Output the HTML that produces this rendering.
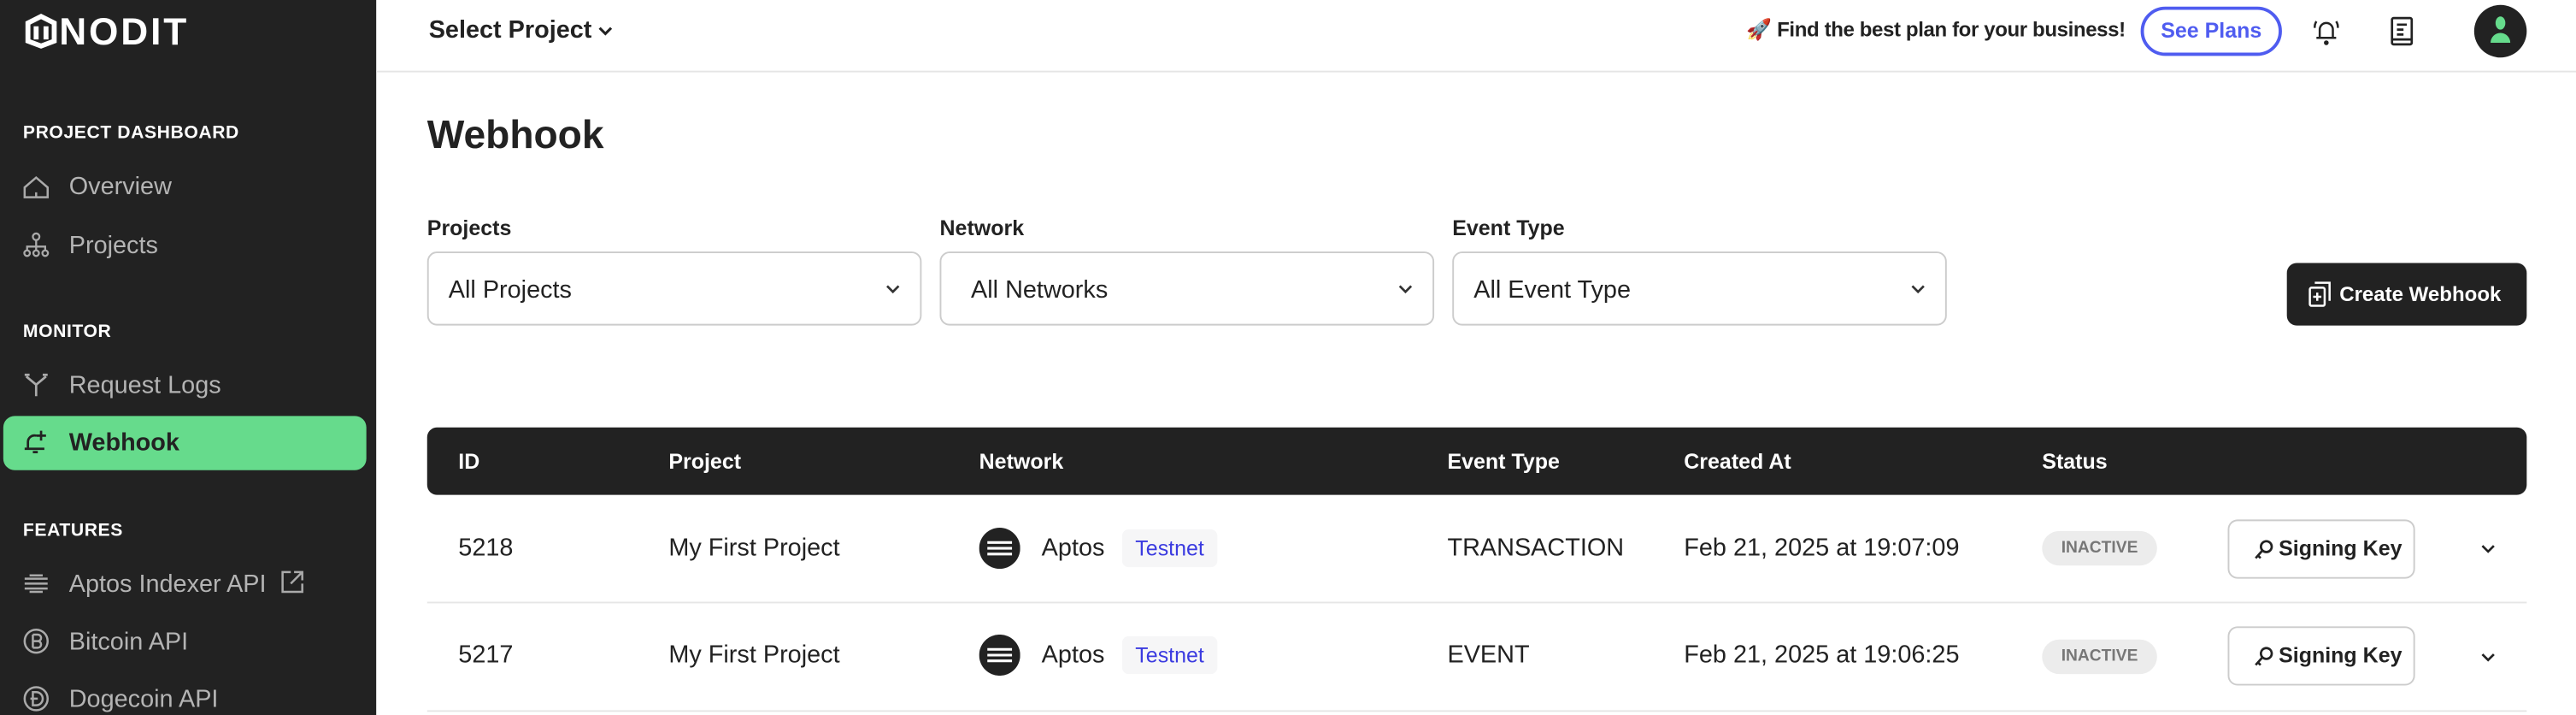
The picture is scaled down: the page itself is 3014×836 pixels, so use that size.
<!DOCTYPE html>
<html><head><meta charset="utf-8"><style>
*{margin:0;padding:0;box-sizing:border-box}
html,body{width:3014px;height:836px;overflow:hidden;background:#fff}
#w{position:absolute;left:0;top:0;width:1568px;height:435px;transform:scale(1.9222);transform-origin:0 0;font-family:"Liberation Sans",sans-serif;color:#222}
.a{position:absolute;white-space:nowrap}
#sb{position:absolute;left:0;top:0;width:229px;height:435px;background:#222}
.sec{font-size:11px;font-weight:bold;color:#fff;left:14px;letter-spacing:.3px}
.it{font-size:15px;color:#b4b4b4;left:42px}
.ic{left:14px;width:16px;height:16px}
.lbl{font-size:13px;font-weight:bold}
.sel{position:absolute;top:153px;height:45px;width:301px;border:1px solid #ccc;border-radius:6px;font-size:15px}
.sel span{position:absolute;top:14px}
.sel svg{position:absolute;right:12px;top:19px}
.th{font-size:13px;font-weight:bold;color:#fff;top:273px}
.td{font-size:15px}
.badge{position:absolute;left:683px;width:58px;height:23px;background:#f6f6f7;border-radius:4px;color:#3b3be0;font-size:13px;text-align:center;line-height:23px}
.pill{position:absolute;left:1243px;width:70px;height:21px;background:#ececec;border-radius:11px;color:#777;font-size:10px;font-weight:bold;text-align:center;line-height:21px}
.sk{position:absolute;left:1356px;width:114px;height:36px;border:1px solid #ccc;border-radius:6px;font-size:13px;font-weight:bold;line-height:34px;padding-left:30px}
.sk svg{position:absolute;left:15px;top:11px}
.line{position:absolute;left:260px;width:1278px;height:1px;background:#e6e6e6}
</style></head><body><div id="w">
<div id="sb">
<svg class="a" style="left:14px;top:8px" width="22" height="22" viewBox="0 0 22 22" fill="none" stroke="#fff" stroke-width="3"><path d="M3 6 L11 2 L19 6 V17 L11 20 L3 17 Z M8 8 V16 M14 8 V16"/></svg>
<div class="a" style="left:36px;top:6px;font-size:23px;font-weight:bold;color:#fff;letter-spacing:1.5px">NODIT</div>
<div class="a sec" style="top:75px">PROJECT DASHBOARD</div>
<svg class="a ic" style="top:106px" viewBox="0 0 16 16" fill="none" stroke="#aaa" stroke-width="1.3"><path d="M1 8 L8 2 L15 8 V14 H1 Z M8 14 V11"/></svg>
<div class="a it" style="top:105px">Overview</div>
<svg class="a ic" style="top:141px" viewBox="0 0 16 16" fill="none" stroke="#aaa" stroke-width="1.2"><circle cx="8" cy="3" r="2"/><circle cx="2.5" cy="13" r="1.7"/><circle cx="8" cy="13" r="1.7"/><circle cx="13.5" cy="13" r="1.7"/><path d="M8 5 V11 M2.5 11 V9 H13.5 V11"/></svg>
<div class="a it" style="top:141px">Projects</div>
<div class="a sec" style="top:196px">MONITOR</div>
<svg class="a ic" style="top:226px" viewBox="0 0 16 16" fill="none" stroke="#aaa" stroke-width="1.4"><path d="M8 15 V8 L2 3 M8 8 L14 3 M1 2 H4 M12 2 H15"/></svg>
<div class="a it" style="top:226px">Request Logs</div>
<div class="a" style="left:2px;top:253px;width:221px;height:33px;background:#66db8c;border-radius:7px"></div>
<svg class="a ic" style="top:261px" viewBox="0 0 16 16" fill="none" stroke="#222" stroke-width="1.4"><path d="M3 12 V8 A4 4 0 0 1 8 4 M1 12 H13 M6 14 H9 M11 1 V7 M8 4 H14"/></svg>
<div class="a" style="left:42px;top:261px;font-size:15px;font-weight:bold;color:#222">Webhook</div>
<div class="a sec" style="top:317px">FEATURES</div>
<svg class="a ic" style="top:347px" viewBox="0 0 16 16" fill="none" stroke="#aaa" stroke-width="1.3"><path d="M1 5 H15 M1 8 H15 M1 11 H15 M4 3 H12 M4 13 H12"/></svg>
<div class="a it" style="top:347px">Aptos Indexer API</div>
<svg class="a" style="left:171px;top:347px" width="14" height="14" viewBox="0 0 14 14" fill="none" stroke="#aaa" stroke-width="1.3"><path d="M6 1 H1 V13 H13 V8 M8 1 H13 V6 M13 1 L6 8"/></svg>
<svg class="a ic" style="top:382px" viewBox="0 0 16 16" fill="none" stroke="#aaa" stroke-width="1.3"><circle cx="8" cy="8" r="7"/><path d="M6 4 V12 M6 4 H9 A2 2 0 0 1 9 8 H6 M9 8 A2 2 0 0 1 9 12 H6"/></svg>
<div class="a it" style="top:382px">Bitcoin API</div>
<svg class="a ic" style="top:417px" viewBox="0 0 16 16" fill="none" stroke="#aaa" stroke-width="1.3"><circle cx="8" cy="8" r="7"/><path d="M6 4 V12 H8 A4 4 0 0 0 8 4 Z M4.5 8 H9"/></svg>
<div class="a it" style="top:417px">Dogecoin API</div>
</div>
<div class="a" style="left:229px;top:43px;width:1339px;height:1px;background:#e5e5e5"></div>
<div class="a" style="left:261px;top:10px;font-size:15px;font-weight:bold">Select Project</div>
<svg class="a" style="left:364px;top:16px" width="9" height="6" viewBox="0 0 9 6" fill="none" stroke="#222" stroke-width="1.6"><path d="M1 1 L4.5 4.5 L8 1"/></svg>
<div class="a" style="left:1063px;top:11px;font-size:12.5px;font-weight:bold;letter-spacing:-.2px">🚀 Find the best plan for your business!</div>
<div class="a" style="left:1303px;top:4px;width:86px;height:30px;border:2px solid #4f5cf0;border-radius:16px;color:#4f5cf0;font-size:13px;font-weight:bold;text-align:center;line-height:26px">See Plans</div>
<svg class="a" style="left:1407px;top:10px" width="18" height="18" viewBox="0 0 18 18" fill="none" stroke="#222" stroke-width="1.3"><path d="M5 13 V8 A4 4 0 0 1 13 8 V13 M3 13 H15 M3 3 A6 6 0 0 0 2 7 M15 3 A6 6 0 0 1 16 7"/><circle cx="9" cy="16" r=".8" fill="#222"/></svg>
<svg class="a" style="left:1455px;top:10px" width="14" height="18" viewBox="0 0 14 18" fill="none" stroke="#222" stroke-width="1.4"><rect x="1" y="1" width="12" height="16" rx="1"/><path d="M4 5 H10 M4 8 H8 M4 11 H8 M1 14 H13"/></svg>
<div class="a" style="left:1506px;top:3px;width:32px;height:32px;border-radius:50%;background:#222"></div>
<svg class="a" style="left:1513px;top:9px" width="18" height="20" viewBox="0 0 18 20" fill="#66db8c"><ellipse cx="9" cy="5" rx="3" ry="4"/><path d="M3 17 A6 6 0 0 1 15 17 Z"/></svg>
<div class="a" style="left:260px;top:69px;font-size:24px;font-weight:bold">Webhook</div>
<div class="a lbl" style="left:260px;top:131px">Projects</div>
<div class="a lbl" style="left:572px;top:131px">Network</div>
<div class="a lbl" style="left:884px;top:131px">Event Type</div>
<div class="sel" style="left:260px"><span style="left:12px">All Projects</span><svg width="9" height="6" viewBox="0 0 9 6" fill="none" stroke="#333" stroke-width="1.4"><path d="M1 1 L4.5 4.5 L8 1"/></svg></div>
<div class="sel" style="left:572px"><span style="left:18px">All Networks</span><svg width="9" height="6" viewBox="0 0 9 6" fill="none" stroke="#333" stroke-width="1.4"><path d="M1 1 L4.5 4.5 L8 1"/></svg></div>
<div class="sel" style="left:884px"><span style="left:12px">All Event Type</span><svg width="9" height="6" viewBox="0 0 9 6" fill="none" stroke="#333" stroke-width="1.4"><path d="M1 1 L4.5 4.5 L8 1"/></svg></div>
<div class="a" style="left:1392px;top:160px;width:146px;height:38px;background:#222;border-radius:6px;color:#fff;font-size:12.5px;font-weight:bold;line-height:38px;padding-left:32px">Create Webhook</div>
<svg class="a" style="left:1405px;top:171px" width="14" height="16" viewBox="0 0 14 16" fill="none" stroke="#fff" stroke-width="1.3"><rect x="1" y="4" width="9" height="11" rx="1"/><path d="M4 1 H13 V12 M5.5 7 V12 M3 9.5 H8"/></svg>
<div class="a" style="left:260px;top:260px;width:1278px;height:41px;background:#222;border-radius:6px"></div>
<div class="a th" style="left:279px">ID</div>
<div class="a th" style="left:407px">Project</div>
<div class="a th" style="left:596px">Network</div>
<div class="a th" style="left:881px">Event Type</div>
<div class="a th" style="left:1025px">Created At</div>
<div class="a th" style="left:1243px">Status</div>
<div class="a td" style="left:279px;top:325px">5218</div>
<div class="a td" style="left:407px;top:325px">My First Project</div>
<svg class="a" style="left:596px;top:321px" width="25" height="25" viewBox="0 0 25 25"><circle cx="12.5" cy="12.5" r="12.5" fill="#222"/><path d="M5 9 H20 M5 12.5 H20 M5 16 H20" stroke="#fff" stroke-width="1.6"/></svg>
<div class="a td" style="left:634px;top:325px">Aptos</div>
<div class="badge" style="top:322px">Testnet</div>
<div class="a td" style="left:881px;top:325px">TRANSACTION</div>
<div class="a td" style="left:1025px;top:325px">Feb 21, 2025 at 19:07:09</div>
<div class="pill" style="top:323px">INACTIVE</div>
<div class="sk" style="top:316px"><svg width="12" height="13" viewBox="0 0 12 13" fill="none" stroke="#222" stroke-width="1.4"><circle cx="7.5" cy="4.5" r="3.3"/><path d="M5 7 L1 11.5 M2.5 10 L4 11.5"/></svg>Signing Key</div>
<svg class="a" style="left:1510px;top:331px" width="9" height="6" viewBox="0 0 9 6" fill="none" stroke="#222" stroke-width="1.4"><path d="M1 1 L4.5 4.5 L8 1"/></svg>
<div class="line" style="top:366px"></div>
<div class="a td" style="left:279px;top:390px">5217</div>
<div class="a td" style="left:407px;top:390px">My First Project</div>
<svg class="a" style="left:596px;top:386px" width="25" height="25" viewBox="0 0 25 25"><circle cx="12.5" cy="12.5" r="12.5" fill="#222"/><path d="M5 9 H20 M5 12.5 H20 M5 16 H20" stroke="#fff" stroke-width="1.6"/></svg>
<div class="a td" style="left:634px;top:390px">Aptos</div>
<div class="badge" style="top:387px">Testnet</div>
<div class="a td" style="left:881px;top:390px">EVENT</div>
<div class="a td" style="left:1025px;top:390px">Feb 21, 2025 at 19:06:25</div>
<div class="pill" style="top:389px">INACTIVE</div>
<div class="sk" style="top:381px"><svg width="12" height="13" viewBox="0 0 12 13" fill="none" stroke="#222" stroke-width="1.4"><circle cx="7.5" cy="4.5" r="3.3"/><path d="M5 7 L1 11.5 M2.5 10 L4 11.5"/></svg>Signing Key</div>
<svg class="a" style="left:1510px;top:397px" width="9" height="6" viewBox="0 0 9 6" fill="none" stroke="#222" stroke-width="1.4"><path d="M1 1 L4.5 4.5 L8 1"/></svg>
<div class="line" style="top:432px"></div>
</div></body></html>
